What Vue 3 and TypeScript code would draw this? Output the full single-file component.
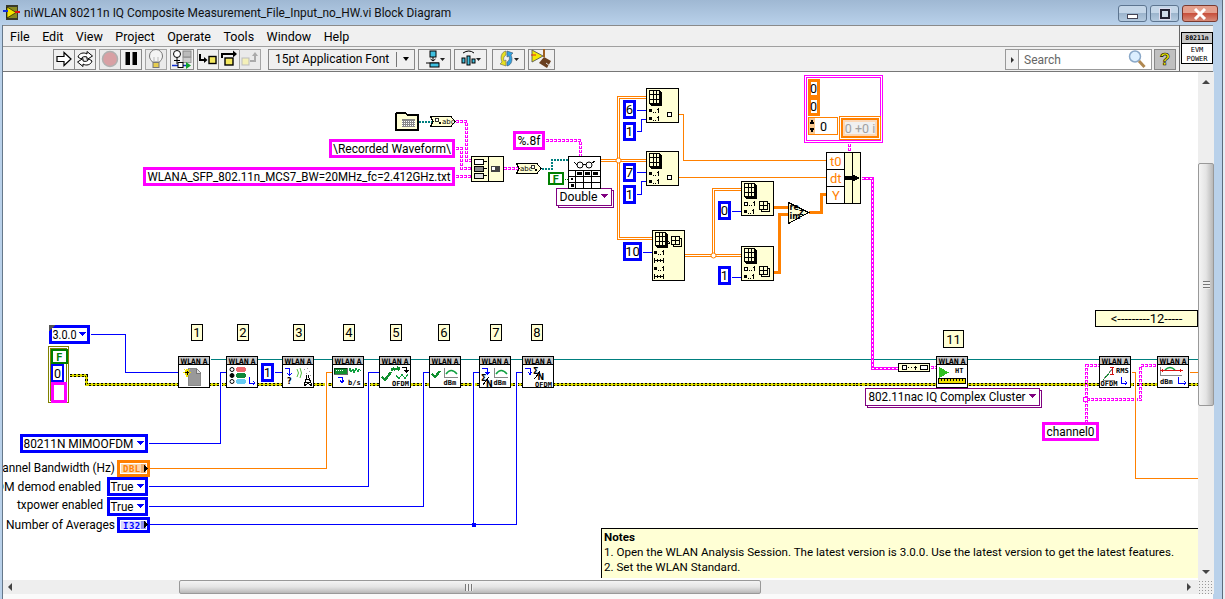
<template>
  <div class="window">
    <div class="title">
      <svg class="title-icon" width="17" height="17" viewBox="0 0 17 17">
        <rect x="3" y="1" width="12" height="15" fill="#3a3a2a" />
        <rect x="4" y="3" width="10" height="11" fill="#8a8a20" />
        <path d="M4 3 L13 8.5 L4 14 Z" fill="#f4e400" stroke="#000" stroke-width="0.6" />
        <path d="M0 7 H5" stroke="#1030e0" stroke-width="2" />
        <path d="M12 8 H17" stroke="#e01010" stroke-width="2" />
      </svg>
      <span class="title-text">niWLAN 80211n IQ Composite Measurement_File_Input_no_HW.vi Block Diagram</span>
      <div class="win-buttons">
        <div class="win-btn"><i class="min-glyph" /></div>
        <div class="win-btn"><i class="max-glyph" /></div>
        <div class="win-btn close">
          <svg width="14" height="12" viewBox="0 0 14 12"><path d="M2 1 L12 11 M12 1 L2 11" stroke="#fff" stroke-width="3" /></svg>
        </div>
      </div>
    </div>

    <div class="frame">
      <div class="inner">
        <div class="head">
          <div class="bars">
            <div class="menubar">
              <span v-for="m in menus" :key="m">{{ m }}</span>
            </div>
            <div class="toolbar">
              <div class="tb-group">
                <button class="tb">
                  <svg width="18" height="18" viewBox="0 0 18 18"><path d="M2 6.5 H9 V2.5 L16 9 L9 15.5 V11.5 H2 Z" fill="#fff" stroke="#000" stroke-width="1.2" /></svg>
                </button>
                <button class="tb">
                  <svg width="18" height="18" viewBox="0 0 18 18"><path d="M2 7 C3 3 8 2 11 4 V1.5 L16.5 6 L11 9.5 V7 C8 6 6 7 5 9 Z" fill="#fff" stroke="#000" /><path d="M16 11 C15 15 10 16 7 14 V16.5 L1.5 12 L7 8.5 V11 C10 12 12 11 13 9 Z" fill="#fff" stroke="#000" /></svg>
                </button>
              </div>
              <div class="tb-group">
                <button class="tb dim">
                  <svg width="18" height="18" viewBox="0 0 18 18"><circle cx="9" cy="9" r="7.5" fill="#d8a0a4" stroke="#b0b0b0" stroke-width="1.5" /></svg>
                </button>
                <button class="tb">
                  <svg width="18" height="18" viewBox="0 0 18 18"><path d="M3.5 2 H8 V15 H3.5 Z M10.5 2 H15 V15 H10.5 Z" fill="#000" /></svg>
                </button>
              </div>
              <div class="tb-group">
                <button class="tb dim">
                  <svg width="18" height="20" viewBox="0 0 18 20"><path d="M5.5 13 C4 11 2.5 10 2.5 7 A6.5 6.5 0 0 1 15.5 7 C15.5 10 14 11 12.5 13 Z" fill="#f4f4f4" stroke="#777" /><path d="M7 13 V8 M11 13 V8" stroke="#bbb" /><rect x="6" y="13.5" width="6" height="5" fill="#e6cd50" stroke="#777" /></svg>
                </button>
              </div>
              <div class="tb-group">
                <button class="tb wide">
                  <svg width="21" height="20" viewBox="0 0 21 20"><circle cx="5" cy="5" r="3.5" fill="#fff" stroke="#000" /><path d="M5 8.5 V15 M2 11.5 H8" stroke="#000" /><rect x="11" y="2" width="8" height="6" fill="#bbb" stroke="#888" /><rect x="11" y="8.5" width="8" height="5" fill="#ccc" stroke="#999" /><path d="M0 16.5 H14" stroke="#1030d0" stroke-width="1.5" /><rect x="6" y="13.5" width="5" height="5" fill="#fff" stroke="#000" /><path d="M14 13 L19 16.5 L14 20 Z" fill="#10a030" /></svg>
                </button>
              </div>
              <div class="tb-group">
                <button class="tb">
                  <svg width="19" height="18" viewBox="0 0 19 18"><path d="M1 4 V10 H7" fill="none" stroke="#000" stroke-width="2" /><path d="M5 7 L8.5 10 L5 13 Z" fill="#000" /><rect x="10" y="6.5" width="7" height="7" fill="#f4e860" stroke="#000" stroke-width="1.4" /></svg>
                </button>
                <button class="tb">
                  <svg width="19" height="18" viewBox="0 0 19 18"><path d="M2 8 V4 H13" fill="none" stroke="#000" stroke-width="2" /><path d="M13 0.5 L17 4 L13 7.5 Z" fill="#000" /><rect x="5" y="8" width="8" height="7" fill="#f4e860" stroke="#000" stroke-width="1.4" /></svg>
                </button>
                <button class="tb dim">
                  <svg width="19" height="18" viewBox="0 0 19 18"><rect x="1" y="8" width="7" height="7" fill="#f4f0b8" stroke="#bbb" /><path d="M9 11 H14 V5" fill="none" stroke="#aaa" stroke-width="2" /><path d="M11 6 L14 2 L17 6 Z" fill="#aaa" /></svg>
                </button>
              </div>
              <div class="font-select">
                <span class="font-label">15pt Application Font</span>
                <span class="font-sep" />
                <i class="font-arrow" />
              </div>
              <div class="tb-group">
                <button class="tb menu-btn">
                  <svg width="20" height="20" viewBox="0 0 20 20"><rect x="5" y="2" width="6" height="6" fill="#40c0e0" stroke="#000" /><path d="M8 8 V12 M5.5 10 L8 12 L10.5 10 M1 14 H14" stroke="#000" fill="none" /><rect x="5" y="14" width="9" height="4" fill="#40c0e0" stroke="#000" /><path d="M15 9 H20 L17.5 12 Z" fill="#222" /></svg>
                </button>
              </div>
              <div class="tb-group">
                <button class="tb menu-btn">
                  <svg width="20" height="20" viewBox="0 0 20 20"><path d="M2 4 Q8 0 13 4" stroke="#000" fill="none" /><rect x="1" y="9" width="3" height="5" fill="#40c0e0" stroke="#000" /><rect x="6" y="7" width="3" height="9" fill="#40c0e0" stroke="#000" /><rect x="11" y="10" width="3" height="4" fill="#40c0e0" stroke="#000" /><path d="M15 9 H20 L17.5 12 Z" fill="#222" /></svg>
                </button>
              </div>
              <div class="tb-group gap-b">
                <button class="tb menu-btn">
                  <svg width="20" height="20" viewBox="0 0 20 20"><path d="M7 2 C2 3 1 9 3 13 L1 15 L7 17 L7 11 L5 12 C4 9 5 7 7 6 Z" fill="#e8e020" stroke="#665" stroke-width="0.6" /><path d="M8 17 C13 16 14 10 12 6 L14 4 L8 2 L8 8 L10 7 C11 10 10 12 8 13 Z" fill="#30a0e0" stroke="#456" stroke-width="0.6" /><path d="M15 9 H20 L17.5 12 Z" fill="#222" /></svg>
                </button>
              </div>
              <div class="tb-group">
                <button class="tb clean">
                  <svg width="22" height="20" viewBox="0 0 22 20"><path d="M1 1 L12 7 L1 13 Z" fill="#f4e800" stroke="#665" /><path d="M0 6 H5" stroke="#e02020" /><path d="M13 0 V8 " stroke="#a06020" stroke-width="2" /><path d="M8 14 L13 8 L20 12 L16 19 Z" fill="#6a4020" /><path d="M15 14 L20 18" stroke="#ddd" /></svg>
                </button>
              </div>
              <div class="tb-spacer" />
              <div class="search">
                <i class="search-mark" />
                <span class="search-text">Search</span>
                <svg class="search-glass" width="20" height="20" viewBox="0 0 20 20"><circle cx="8" cy="7.5" r="5.5" fill="#dcefff" stroke="#8aa8c8" stroke-width="1.5" /><path d="M12 12 L17.5 18" stroke="#b08850" stroke-width="3" /></svg>
              </div>
              <div class="help">?</div>
            </div>
          </div>
          <div class="icon-pane">
            <div class="vi-icon">
              <div class="vi-icon-top">80211n</div>
              <div class="vi-icon-body">EVM<br />POWER</div>
            </div>
          </div>
        </div>

        <div class="main">
          <div class="canvas">
            <svg class="diagram" width="1195" height="506" viewBox="3 72 1195 506">
              <defs>
                <symbol id="arr" width="13" height="16" viewBox="0 0 13 16">
                  <rect x="2.5" y="2.5" width="10" height="13" fill="none" stroke="#000" />
                  <rect x="1.5" y="1.5" width="10" height="13" fill="#ffffd5" stroke="#000" />
                  <path d="M0.5 0.5 H10.5 V13.5 H0.5 Z M0.5 4.5 H10.5 M0.5 9 H10.5 M4 0.5 V13.5 M7.5 0.5 V13.5" fill="#ffffd5" stroke="#000" />
                </symbol>
                <symbol id="arr2" width="11" height="11" viewBox="0 0 11 11">
                  <path d="M2.5 2.5 H10.5 V10.5 H2.5 Z" fill="none" stroke="#000" />
                  <path d="M0.5 0.5 H8.5 V8.5 H0.5 Z M0.5 4.5 H8.5 M4.5 0.5 V8.5" fill="#ffffd5" stroke="#000" />
                </symbol>
                <symbol id="idx" width="11" height="5" viewBox="0 0 11 5">
                  <rect x="0" y="1" width="3" height="3" fill="#000" />
                  <path d="M4 4.5 H5 M6 4.5 H7 M9 0 V5 M8 1 H10" stroke="#000" />
                </symbol>
                <symbol id="len" width="10" height="5" viewBox="0 0 10 5">
                  <path d="M0.5 0 V5 M9.5 0 V5 M0 2.5 H10 M3 1 V4 M6 1 V4" stroke="#000" />
                </symbol>
              </defs>

              <!-- wires -->
              <g class="wires" transform="translate(0.5 0.5)">
                <path class="w-teal" d="M210 359 H1197" />
                <path class="w-err-base" d="M69 375 H86 V384 H1197" />
                <path class="w-err-dash" d="M69 375 H86 V384 H1197" />
                <path class="w-err-center" d="M69 375 H86 V384 H1197" />
                <template v-for="(w, i) in wires" :key="i">
                  <path v-if="w.kind === 'blue' || w.kind === 'orange'" class="w-halo" :d="w.d" />
                  <path :class="'w-' + w.kind" :d="w.d" />
                  <path v-if="w.kind === 'orange2'" class="w-center" :d="w.d" />
                  <path v-if="w.kind === 'pink' || w.kind === 'pink2'" class="w-pink-inner" :d="w.d" />
                </template>
                <circle cx="618" cy="160" r="2.5" fill="#fff" stroke="#ff8000" />
                <circle cx="713" cy="255" r="2.5" fill="#fff" stroke="#ff8000" />
                <rect x="471" y="522" width="4" height="4" fill="#0000ff" />
                <rect x="1083" y="397" width="4" height="4" fill="#fff" stroke="#ff00ff" />
              </g>

              <!-- numbered comments -->
              <g v-for="c in comments" :key="c.text">
                <rect class="note" :x="c.x + 0.5" :y="c.y + 0.5" :width="c.w" :height="c.h" />
                <text class="t" :x="c.x + c.w / 2 + 0.5" :y="c.y + c.h - 3.5" text-anchor="middle">{{ c.text }}</text>
              </g>

              <!-- terminal and constant boxes -->
              <g v-for="k in constants" :key="k.text + k.x + k.y">
                <rect :x="k.x + 1.5" :y="k.y + 1.5" :width="k.w - 3" :height="k.h - 3" fill="#fff" :stroke="k.color" stroke-width="3" />
                <text class="t" :x="k.x + k.w / 2" :y="k.y + k.h - 5" text-anchor="middle" :textLength="k.tw" lengthAdjust="spacingAndGlyphs">{{ k.text }}</text>
              </g>

              <!-- enum rings with arrow -->
              <g v-for="r in rings" :key="r.text + r.y">
                <rect :x="r.x + 1.5" :y="r.y + 1.5" :width="r.w - 3" :height="r.h - 3" fill="#fff" stroke="#0000ff" stroke-width="3" />
                <text class="t" :x="r.x + 3.5" :y="r.y + r.h - 5" :textLength="r.tw" lengthAdjust="spacingAndGlyphs">{{ r.text }}</text>
                <path :d="`M${r.x + r.w - 11} ${r.y + 7} h7 l-3.5 4 z`" fill="#0000ff" />
              </g>
              <path d="M49 325 H56 L49 331 Z" fill="#555" />

              <!-- typed rings -->
              <g v-for="r in typeRings" :key="r.text">
                <rect :x="r.x + 2.5" :y="r.y + 2.5" :width="r.w" :height="r.h" fill="#fff" stroke="#800080" />
                <rect :x="r.x + 0.5" :y="r.y + 0.5" :width="r.w" :height="r.h" fill="#fff" stroke="#800080" />
                <text class="t" :x="r.x + 3.5" :y="r.y + r.h - 4" :textLength="r.tw" lengthAdjust="spacingAndGlyphs">{{ r.text }}</text>
                <path :d="`M${r.x + r.w - 10} ${r.y + 6} h7 l-3.5 4 z`" fill="#800080" />
              </g>

              <!-- front panel labels -->
              <text v-for="l in labels" :key="l.text" class="t" :x="l.x" :y="l.y" text-anchor="end" :textLength="l.tw" lengthAdjust="spacingAndGlyphs">{{ l.text }}</text>

              <!-- numeric controls -->
              <g>
                <rect x="118.5" y="461.5" width="30" height="14" fill="#fff" stroke="#ff8000" stroke-width="3" />
                <rect x="121" y="464" width="25" height="9" fill="#fbd8b0" />
                <rect x="141" y="464" width="5" height="9" fill="#f0b070" />
                <text class="tiny-mono orange-t" x="123" y="472">DBL</text>
                <path d="M144 464 L148 468.5 L144 473 Z" fill="#000" />
                <rect x="118.5" y="518.5" width="30" height="13" fill="#fff" stroke="#0000ff" stroke-width="3" />
                <rect x="121" y="521" width="25" height="8" fill="#d8d8ff" />
                <rect x="141" y="521" width="5" height="8" fill="#9090f0" />
                <text class="tiny-mono blue-t" x="123" y="529">I32</text>
                <path d="M144 520 L148 524.5 L144 529 Z" fill="#000" />
              </g>

              <!-- error cluster constant -->
              <g>
                <rect x="48.5" y="346.5" width="20" height="56" fill="#fff" stroke="#808000" />
                <rect x="50.5" y="348.5" width="16" height="52" fill="#fff" stroke="#808000" />
                <rect x="52" y="350" width="15" height="13" fill="#fff" stroke="#007f00" stroke-width="2.5" />
                <text class="bold-tiny green-t" x="56" y="360.5">F</text>
                <rect x="52" y="365" width="11" height="16" fill="#fff" stroke="#0000ff" stroke-width="2.5" />
                <text class="t small" x="57.5" y="378" text-anchor="middle">0</text>
                <rect x="52" y="383" width="13" height="18" fill="#fff" stroke="#ff00ff" stroke-width="3" />
              </g>

              <!-- green boolean for read -->
              <g>
                <rect x="549" y="173" width="14" height="11" fill="#fff" stroke="#007f00" stroke-width="2.5" />
                <text class="bold-tiny green-t" x="552.5" y="183">F</text>
              </g>

              <!-- folder constant -->
              <g>
                <path d="M395.5 129.5 V114.5 L398 112.5 H405 L407 114.5 H417.5 V129.5 Z" fill="#ffffd5" stroke="#000" stroke-width="2" />
                <rect x="402" y="119" width="13" height="8" fill="#888" />
                <path d="M402 121 H415 M402 123 H415 M402 125 H415" stroke="#fff" stroke-dasharray="1 1" />
              </g>

              <!-- string conversion pills -->
              <g>
                <path class="cream-line" d="M430.5 116.5 H451 L455 121.5 L451 126.5 H430.5 L433 121.5 Z" />
                <rect x="435" y="118" width="3" height="3" fill="#fff" stroke="#000" stroke-width="0.8" />
                <rect x="439" y="122" width="2" height="2" fill="#000" />
                <text class="mini" x="442" y="124">abc</text>
                <path class="cream-line" d="M516.5 163.5 H537 L541 168.5 L537 173.5 H516.5 L519 168.5 Z" />
                <text class="mini" x="520" y="171">abc</text>
                <rect x="531" y="165" width="3" height="3" fill="#fff" stroke="#000" stroke-width="0.8" />
                <rect x="535" y="169" width="2" height="2" fill="#000" />
              </g>

              <!-- build path -->
              <g>
                <rect class="cream-node" x="471.5" y="156.5" width="32" height="25" />
                <path d="M488 157 V181" stroke="#000" />
                <rect x="474" y="159" width="9" height="5" fill="#fff" stroke="#000" />
                <rect x="474" y="166" width="9" height="5" fill="#888" stroke="#000" />
                <rect x="474" y="173" width="9" height="5" fill="#ddd" stroke="#000" />
                <path d="M484 161.5 H487 M484 168.5 H487 M484 175.5 H487" stroke="#000" />
                <rect x="491" y="165.5" width="9" height="6" fill="#444" />
                <rect x="492" y="167" width="3" height="3" fill="#fff" />
              </g>

              <!-- read from spreadsheet -->
              <g>
                <rect x="568.5" y="156.5" width="32" height="32" fill="#fff" stroke="#000" stroke-width="1.4" />
                <circle cx="580" cy="165" r="3" fill="none" stroke="#000" />
                <circle cx="589" cy="165" r="3" fill="none" stroke="#000" />
                <path d="M583 164 H586 M592 163 L595 161 M577 165 L574 162" stroke="#000" fill="none" />
                <path d="M569 170.5 H600 M569 176.5 H600 M569 182.5 H600 M575.5 171 V188 M583.5 171 V188 M591.5 171 V188" stroke="#000" />
                <rect x="577" y="172" width="5" height="3" fill="#000" />
                <rect x="585" y="172" width="5" height="3" fill="#000" />
                <rect x="593" y="172" width="5" height="3" fill="#000" />
                <rect x="571" y="178" width="2" height="2" fill="#000" />
                <rect x="571" y="184" width="3" height="3" fill="#000" />
              </g>

              <!-- index array nodes -->
              <g v-for="n in indexNodes" :key="n.x + '-' + n.y" :transform="`translate(${n.x} ${n.y})`">
                <rect class="cream-node" x="0.5" y="0.5" width="32" :height="n.h" />
                <use href="#arr" x="3" y="2" width="13" height="16" />
                <template v-if="n.type === 'elem'">
                  <use href="#idx" x="3" y="20" width="11" height="5" />
                  <use href="#idx" x="3" y="28" width="11" height="5" />
                  <rect x="21.5" y="24.5" width="4" height="4" fill="#fff" stroke="#000" />
                </template>
                <template v-else-if="n.type === 'col'">
                  <rect x="3.5" y="21.5" width="3" height="3" fill="#fff" stroke="#000" />
                  <path d="M8 24.5 H9 M10 24.5 H11 M13 20 V25 M12 21 H14" stroke="#000" />
                  <use href="#idx" x="3" y="28" width="11" height="5" />
                  <use href="#arr2" x="18" y="20" width="11" height="11" />
                </template>
                <template v-else>
                  <path d="M15 13 H18 M16.5 11.5 L18 13 L16.5 14.5" stroke="#000" fill="none" />
                  <use href="#arr2" x="19" y="6" width="11" height="11" />
                  <use href="#idx" x="2" y="20" width="11" height="5" />
                  <use href="#len" x="2" y="28" width="10" height="5" />
                  <use href="#idx" x="2" y="36" width="11" height="5" />
                  <use href="#len" x="2" y="44" width="10" height="5" />
                </template>
              </g>

              <!-- re/im to complex -->
              <g>
                <path class="cream-line" d="M788.5 202.5 L808.5 212.5 L788.5 223.5 Z" />
                <text class="mini bold" x="789.5" y="210">re</text>
                <text class="mini bold" x="789.5" y="219">im</text>
                <text class="mini bold" x="799" y="215">z</text>
              </g>

              <!-- bundle waveform -->
              <g>
                <rect x="826.5" y="152.5" width="18" height="51" fill="#fff" stroke="#000" />
                <rect class="cream-node" x="844.5" y="152.5" width="8" height="51" />
                <rect class="cream-node" x="852.5" y="152.5" width="8" height="51" />
                <path d="M827 169.5 H844 M827 186.5 H844" stroke="#000" />
                <text class="t orange-t" x="830" y="166">t0</text>
                <text class="t orange-t" x="830" y="183">dt</text>
                <text class="t orange-t" x="832" y="200">Y</text>
                <path d="M845 176 H852 V174 L860 178 L852 182 V180 H845 Z" fill="#000" />
              </g>

              <!-- complex array cluster constant -->
              <g>
                <rect x="804.5" y="75.5" width="78" height="67" fill="#fff" stroke="#ff00ff" />
                <rect x="806.5" y="77.5" width="74" height="63" fill="#fff" stroke="#ff00ff" />
                <rect x="809" y="80" width="9" height="16" fill="#fff" stroke="#ff8000" stroke-width="3" />
                <rect x="809" y="98" width="9" height="16" fill="#fff" stroke="#ff8000" stroke-width="3" />
                <text class="t small" x="813.5" y="93" text-anchor="middle">0</text>
                <text class="t small" x="813.5" y="111" text-anchor="middle">0</text>
                <rect x="808.5" y="117.5" width="29" height="17" fill="#fff" stroke="#ff8000" />
                <rect x="809" y="118" width="6" height="16" fill="#f8c890" />
                <path d="M812 119 L814.5 124 H809.5 Z M812 133 L814.5 128 H809.5 Z" fill="#000" />
                <text class="t small" x="820" y="131">0</text>
                <rect x="839.5" y="116.5" width="41" height="23" fill="#fff" stroke="#ff8000" />
                <rect x="842" y="119" width="36" height="18" fill="#fbd8b8" stroke="#ff8000" stroke-width="2" />
                <rect x="845" y="122" width="30" height="12" fill="#f0f0f0" />
                <text class="t small gray-t" x="860" y="133" text-anchor="middle">0 +0 i</text>
              </g>

              <!-- cluster to waveform pill -->
              <g>
                <rect class="cream-node" x="898.5" y="363.5" width="31" height="8" stroke-width="1.5" />
                <rect x="902" y="365" width="4" height="4" fill="#fff" stroke="#000" />
                <path d="M908 367.5 H909 M911 367.5 H912 M914 367.5 H917 M915.5 365.5 V369.5" stroke="#000" />
                <rect x="920" y="365" width="7" height="4" fill="#fff" stroke="#000" />
              </g>

              <!-- WLAN A subVIs -->
              <g v-for="b in blocks" :key="b.icon" :transform="`translate(${b.x} 356)`">
                <rect x="0.5" y="0.5" width="31" height="31" fill="#fff" stroke="#000" stroke-width="1.2" />
                <rect x="1" y="1" width="30" height="8" fill="#c8c8c8" />
                <path d="M1 8.5 H31" stroke="#000" />
                <text class="wlan" x="16" y="7.6" text-anchor="middle" textLength="27" lengthAdjust="spacingAndGlyphs">WLAN A</text>

                <template v-if="b.icon === 'open'">
                  <path d="M10.5 12.5 H18 L22.5 17 V29.5 H10.5 Z" fill="#999" stroke="#888" />
                  <path d="M18 12.5 V17 H22.5" fill="#ddd" stroke="#777" />
                  <path d="M5 16.5 H13 M9 12.5 V20.5 M6.5 13.5 L11.5 19.5 M11.5 13.5 L6.5 19.5" stroke="#f0e000" stroke-width="1.2" />
                  <path d="M9 14.5 V18.5 M7 16.5 H11" stroke="#000" />
                </template>
                <template v-else-if="b.icon === 'standard'">
                  <circle cx="6" cy="13.5" r="2" fill="#fff" stroke="#000" />
                  <circle cx="6" cy="19.5" r="2" fill="#000" stroke="#000" />
                  <circle cx="6" cy="25.5" r="2" fill="#fff" stroke="#000" />
                  <rect x="10" y="11" width="10" height="5" rx="2.5" fill="#f06a70" />
                  <rect x="10" y="17" width="10" height="5" rx="2.5" fill="#10883a" />
                  <rect x="10" y="23" width="10" height="5" rx="2.5" fill="#66ccf4" />
                  <path class="ic-blue" d="M23 21 V27 H29 M27 25 L29 27 L27 29" />
                </template>
                <template v-else-if="b.icon === 'stream'">
                  <path class="ic-blue" d="M3 12.5 H7.5 V19 M5 17 L7.5 19.5 L10 17" />
                  <text class="mini bold" x="5" y="28">?</text>
                  <path d="M15 13 Q18 17 15 21 M18 12 Q21 17 18 22" fill="none" stroke="#50c040" />
                  <path d="M22 13 h1 M25 12 h1 M27 15 h1 M24 17 h1 M28 19 h1" stroke="#999" />
                  <path d="M25 19 L22 30 M26 19 L30 30 M23 26 H29 M24 23 H28 M22 30 L28 26 M30 30 L24 26" fill="none" stroke="#000" />
                </template>
                <template v-else-if="b.icon === 'bw'">
                  <rect x="2" y="12" width="13" height="6" fill="#109030" stroke="#000" stroke-width="0.6" />
                  <path d="M4 14.5 H12" stroke="#fff" stroke-dasharray="1 1" />
                  <path class="ic-green" d="M17 15 L18 12 L19 16 L21 13 L22 17 L24 12 L26 16 L27 13 L29 15" />
                  <path class="ic-blue" d="M6 21 H10 V26 M8 24.5 L10 26.5 L12 24.5" />
                  <text class="mini2" x="16" y="28.5">b/s</text>
                </template>
                <template v-else-if="b.icon === 'ofdm'">
                  <path class="check" d="M3 21 L6 24 L12 16" />
                  <path d="M12 13.5 L21 12.5" stroke="#109030" stroke-width="2.4" />
                  <path d="M14 11 L16 15 M18 10.5 L20 14.5" stroke="#109030" stroke-width="1.2" />
                  <path d="M23 11.5 H27.5 V16 M25.5 14 L27.5 16.5 L29.5 14" fill="none" stroke="#000" />
                  <path class="ic-green" d="M17 19 L20 23 L23 18 L26 23 L29 18" />
                  <text class="mini2" x="13" y="30">OFDM</text>
                </template>
                <template v-else-if="b.icon === 'power'">
                  <path class="check" d="M3 18 L6 21 L11 15" />
                  <path d="M15.5 12 V21 H29" fill="none" stroke="#888" />
                  <path class="ic-green thick" d="M17 18 Q22 11 28 18" />
                  <text class="mini2" x="14.5" y="29">dBm</text>
                </template>
                <template v-else-if="b.icon === 'avgpower'">
                  <path class="ic-blue" d="M3 12.5 H8.5 V18 M6.5 16 L8.5 18.5 L10.5 16" />
                  <text class="mini bold" x="2" y="25">Σ</text>
                  <path d="M4 29 L10 21" stroke="#000" />
                  <text class="mini bold" x="7" y="30.5">N</text>
                  <path d="M15.5 12 V21 H29" fill="none" stroke="#888" />
                  <path class="ic-green thick" d="M17 18 Q22 11 28 18" />
                  <text class="mini2" x="14.5" y="29">dBm</text>
                </template>
                <template v-else-if="b.icon === 'avgofdm'">
                  <path class="ic-blue" d="M3 12.5 H8 V18 M6 16 L8 18.5 L10 16" />
                  <text class="mini bold" x="11" y="18">Σ</text>
                  <path d="M12.5 23 L18 15" stroke="#000" />
                  <text class="mini bold" x="15.5" y="23.5">N</text>
                  <text class="mini2" x="13" y="30.5">OFDM</text>
                </template>
                <template v-else-if="b.icon === 'read'">
                  <path d="M3 11 L13 16.5 L3 22 Z" fill="#30c020" />
                  <text class="mini2" x="19" y="17">HT</text>
                  <rect x="2.5" y="22.5" width="27" height="5" fill="#f0e000" stroke="#000" />
                  <path d="M5 23 V25 M8 23 V25 M11 23 V25 M14 23 V25 M17 23 V25 M20 23 V25 M23 23 V25 M26 23 V25" stroke="#000" />
                </template>
                <template v-else-if="b.icon === 'rms'">
                  <path d="M4 24 H16 M4 24 L14 12" stroke="#888" />
                  <path d="M4 24 L12 15" stroke="#109030" stroke-dasharray="2 1" />
                  <path d="M13 11 V18 M11 11 H15 M11 18 H15" stroke="#d01010" />
                  <text class="mini2" x="17" y="17">RMS</text>
                  <text class="mini2" x="1.5" y="30">OFDM</text>
                  <path class="ic-blue" d="M22 21 V27 H28 M26 25 L28 27 L26 29" />
                </template>
                <template v-else>
                  <path d="M3 11 V19 H25" fill="none" stroke="#888" />
                  <path d="M3 14.5 H26 M5 13 V16 M23 13 V16" stroke="#e01010" />
                  <path class="ic-green thick" d="M8 14 Q13 9 18 14" />
                  <text class="mini2" x="3" y="28">dBm</text>
                  <path class="ic-blue" d="M21 21 V27 H29 M27 25 L29 27 L27 29" />
                </template>
              </g>
            </svg>

            <div class="notes">
              <div class="notes-head">Notes</div>
              <div>1. Open the WLAN Analysis Session. The latest version is 3.0.0. Use the latest version to get the latest features.</div>
              <div>2. Set the WLAN Standard.</div>
            </div>
          </div>

          <div class="vscroll">
            <i class="arrow-up" />
            <div class="vthumb"><span class="vgrip" /></div>
            <span class="v-rest" />
            <i class="arrow-down" />
          </div>
        </div>

        <div class="bottom">
          <div class="hscroll">
            <i class="arrow-left" />
            <div class="hthumb"><span class="hgrip" /></div>
            <span class="v-rest" />
            <i class="arrow-right" />
          </div>
          <div class="corner" />
        </div>
        <div class="foot" />
      </div>
    </div>
  </div>
</template>

<script setup lang="ts">
// LabVIEW block diagram window; the diagram svg uses page coordinates in its viewBox
type WireKind = 'blue' | 'orange' | 'orange2' | 'orangeThick' | 'pink' | 'pink2' | 'teal' | 'tealDot' | 'greenDot'

interface Wire { d: string; kind: WireKind }
interface Box { x: number; y: number; w: number; h: number; text: string; color?: string; tw?: number }

const menus = ['File', 'Edit', 'View', 'Project', 'Operate', 'Tools', 'Window', 'Help']

const wires: Wire[] = [
  { kind: 'tealDot', d: 'M418 121 H431' },
  { kind: 'pink', d: 'M455 121 H466 V160 H472' },
  { kind: 'pink', d: 'M455 148 H461 V168 H472' },
  { kind: 'pink', d: 'M455 176 H472' },
  { kind: 'pink', d: 'M503 168 H517' },
  { kind: 'tealDot', d: 'M541 168 H551 V159 H568' },
  { kind: 'pink', d: 'M545 140 H580 V156' },
  { kind: 'greenDot', d: 'M564 179 H568' },
  { kind: 'orange2', d: 'M600 160 H646' },
  { kind: 'orange2', d: 'M646 97 H618 V238 H652' },
  { kind: 'blue', d: 'M636 110 H646' },
  { kind: 'blue', d: 'M636 131 H641 V119 H646' },
  { kind: 'blue', d: 'M636 172 H646' },
  { kind: 'blue', d: 'M636 194 H641 V181 H646' },
  { kind: 'blue', d: 'M642 252 H652' },
  { kind: 'orange2', d: 'M684 255 H741' },
  { kind: 'orange2', d: 'M741 189 H713 V255' },
  { kind: 'blue', d: 'M731 211 H741' },
  { kind: 'blue', d: 'M731 277 H741' },
  { kind: 'orangeThick', d: 'M773 207 H788' },
  { kind: 'orangeThick', d: 'M773 272 H779 V214 H788' },
  { kind: 'orangeThick', d: 'M808 212 H821 V194 H827' },
  { kind: 'orange', d: 'M678 114 H683 V160 H827' },
  { kind: 'orange', d: 'M678 177 H827' },
  { kind: 'pink', d: 'M849 143 V152' },
  { kind: 'pink2', d: 'M861 178 H872 V368 H898' },
  { kind: 'pink', d: 'M930 367 H937' },
  { kind: 'blue', d: 'M90 334 H125 V372 H178' },
  { kind: 'blue', d: 'M148 443 H220 V372 H226' },
  { kind: 'blue', d: 'M274 372 H282' },
  { kind: 'orange', d: 'M149 468 H326 V372 H332' },
  { kind: 'blue', d: 'M148 486 H368 V372 H379' },
  { kind: 'blue', d: 'M148 506 H423 V372 H429' },
  { kind: 'blue', d: 'M149 524 H516 V372 H522' },
  { kind: 'blue', d: 'M473 524 V372 H479' },
  { kind: 'pink', d: 'M1086 422 V365 H1099' },
  { kind: 'pink', d: 'M1086 399 H1140 V365 H1157' },
  { kind: 'orange', d: 'M1131 372 H1135 V478 H1197' },
  { kind: 'orange', d: 'M1189 372 H1197' },
]

const comments: Box[] = [
  { x: 191, y: 324, w: 11, h: 16, text: '1' },
  { x: 237, y: 324, w: 11, h: 16, text: '2' },
  { x: 293, y: 324, w: 11, h: 16, text: '3' },
  { x: 343, y: 324, w: 11, h: 16, text: '4' },
  { x: 390, y: 324, w: 11, h: 16, text: '5' },
  { x: 438, y: 324, w: 11, h: 16, text: '6' },
  { x: 490, y: 324, w: 11, h: 16, text: '7' },
  { x: 531, y: 324, w: 11, h: 16, text: '8' },
  { x: 943, y: 330, w: 20, h: 17, text: '11' },
  { x: 1095, y: 310, w: 102, h: 16, text: '<---------12-----' },
]

const BLUE = '#0000ff'
const PINK = '#ff00ff'
const constants: Box[] = [
  { x: 329, y: 139, w: 126, h: 19, text: '\\Recorded Waveform\\', color: PINK, tw: 118 },
  { x: 143, y: 167, w: 312, h: 19, text: 'WLANA_SFP_802.11n_MCS7_BW=20MHz_fc=2.412GHz.txt', color: PINK, tw: 303 },
  { x: 513, y: 131, w: 32, h: 19, text: '%.8f', color: PINK, tw: 23 },
  { x: 1042, y: 422, w: 57, h: 19, text: 'channel0', color: PINK, tw: 48 },
  { x: 623, y: 100, w: 13, h: 19, text: '6', color: BLUE },
  { x: 623, y: 122, w: 13, h: 19, text: '1', color: BLUE },
  { x: 623, y: 163, w: 13, h: 19, text: '7', color: BLUE },
  { x: 623, y: 185, w: 13, h: 19, text: '1', color: BLUE },
  { x: 623, y: 242, w: 19, h: 19, text: '10', color: BLUE },
  { x: 718, y: 201, w: 13, h: 19, text: '0', color: BLUE },
  { x: 718, y: 266, w: 13, h: 19, text: '1', color: BLUE },
  { x: 261, y: 363, w: 13, h: 19, text: '1', color: BLUE },
]

const rings: Box[] = [
  { x: 49, y: 325, w: 41, h: 19, text: '3.0.0', tw: 24 },
  { x: 20, y: 434, w: 128, h: 19, text: '80211N MIMOOFDM', tw: 110 },
  { x: 107, y: 477, w: 41, h: 19, text: 'True', tw: 23 },
  { x: 107, y: 497, w: 41, h: 19, text: 'True', tw: 23 },
]

const typeRings: Box[] = [
  { x: 556, y: 188, w: 55, h: 17, text: 'Double', tw: 38 },
  { x: 865, y: 388, w: 174, h: 17, text: '802.11nac IQ Complex Cluster', tw: 157 },
]

const labels = [
  { x: 115, y: 472, text: 'Channel Bandwidth (Hz)', tw: 127 },
  { x: 101, y: 491, text: 'OFDM demod enabled', tw: 120 },
  { x: 103, y: 509, text: 'txpower enabled', tw: 86 },
  { x: 115, y: 529, text: 'Number of Averages', tw: 109 },
]

const indexNodes = [
  { x: 646, y: 88, h: 34, type: 'elem' },
  { x: 646, y: 151, h: 34, type: 'elem' },
  { x: 741, y: 181, h: 34, type: 'col' },
  { x: 741, y: 246, h: 34, type: 'col' },
  { x: 652, y: 230, h: 50, type: 'multi' },
]

const blocks = [
  { x: 178, icon: 'open' },
  { x: 226, icon: 'standard' },
  { x: 282, icon: 'stream' },
  { x: 332, icon: 'bw' },
  { x: 379, icon: 'ofdm' },
  { x: 429, icon: 'power' },
  { x: 479, icon: 'avgpower' },
  { x: 522, icon: 'avgofdm' },
  { x: 936, icon: 'read' },
  { x: 1099, icon: 'rms' },
  { x: 1157, icon: 'spectrum' },
]
</script>

<style scoped>
.window {
  width: 1223px;
  height: 599px;
  display: flex;
  flex-direction: column;
  font-family: Roboto, "Noto Sans", sans-serif;
  color: #000;
  overflow: hidden;
}

.title {
  height: 25px;
  flex: none;
  display: flex;
  align-items: center;
  padding: 0 4px 0 3px;
  background: linear-gradient(#9fb8d3, #b9d1ea);
  box-sizing: border-box;
  border-right: 1px solid #5c6c7c;
}

.title-icon {
  margin-right: 4px;
  flex: none;
}

.title-text {
  font-size: 11.9px;
  color: #111;
  white-space: nowrap;
}

.win-buttons {
  margin-left: auto;
  display: flex;
  gap: 3px;
  align-self: flex-start;
  margin-top: 5px;
}

.win-btn {
  width: 29px;
  height: 17px;
  box-sizing: border-box;
  border: 1px solid #5d7590;
  border-radius: 3px;
  background: linear-gradient(#c4d6e8 45%, #9cb5cd 50%, #b4cadf);
  display: flex;
  align-items: center;
  justify-content: center;
}

.win-btn.close {
  width: 36px;
  background: linear-gradient(#e4a08e 45%, #c8503c 50%, #d68a78);
  border-color: #7a3a30;
}

.min-glyph {
  display: block;
  width: 9px;
  height: 3px;
  margin-top: 5px;
  background: #fff;
  border: 1px solid #445;
}

.max-glyph {
  display: block;
  width: 6px;
  height: 6px;
  background: #cfdcea;
  border: 2px solid #223;
  outline: 1px solid #dde;
}

.frame {
  flex: 1;
  display: flex;
  min-height: 0;
  background: #b9d1ea;
  border-left: 2px solid #b9d1ea;
  padding-right: 9px;
  border-right: 1px solid #5c6c7c;
}

.inner {
  flex: 1;
  display: flex;
  flex-direction: column;
  min-width: 0;
  border-left: 1px solid #66788a;
  background: #f0f0f0;
}

.head {
  height: 47px;
  flex: none;
  display: flex;
  border-top: 1px solid #8a8a8a;
  box-sizing: border-box;
  border-bottom: 1px solid #777;
}

.bars {
  flex: 1;
  min-width: 0;
  display: flex;
  flex-direction: column;
}

.menubar {
  height: 21px;
  box-sizing: border-box;
  display: flex;
  align-items: center;
  gap: 12.5px;
  padding-left: 7px;
  font-size: 12.5px;
  border-bottom: 1px solid #a0a0a0;
}

.toolbar {
  flex: 1;
  display: flex;
  align-items: center;
  padding-left: 51px;
  padding-right: 3px;
  gap: 4px;
}

.tb-group {
  display: flex;
}

.gap-b {
  margin-left: 2px;
}

.tb {
  width: 22px;
  height: 21px;
  padding: 0;
  margin: 0;
  box-sizing: border-box;
  background: #f0f0f0;
  border: 1px solid #888;
  margin-left: -1px;
  display: flex;
  align-items: center;
  justify-content: center;
}

.tb.dim {
  background: #eaeaea;
  border-color: #a4a4a4;
}

.tb.wide {
  width: 24px;
}

.tb.menu-btn {
  width: 33px;
}

.tb.clean {
  width: 27px;
}

.font-select {
  width: 147px;
  height: 21px;
  box-sizing: border-box;
  border: 1px solid #888;
  margin-left: 3px;
  display: flex;
  align-items: center;
  padding-left: 6px;
  font-size: 12px;
  white-space: nowrap;
}

.font-label {
  flex: 1;
}

.font-sep {
  width: 1px;
  height: 15px;
  background: #777;
}

.font-arrow {
  width: 0;
  height: 0;
  margin: 0 5px 0 6px;
  border-left: 3.5px solid transparent;
  border-right: 3.5px solid transparent;
  border-top: 4px solid #000;
}

.tb-spacer {
  flex: 1;
}

.search {
  width: 147px;
  height: 21px;
  box-sizing: border-box;
  background: #fff;
  border: 1px solid #999;
  display: flex;
  align-items: center;
  font-size: 12px;
  color: #666;
}

.search-mark {
  width: 13px;
  height: 19px;
  flex: none;
  box-sizing: border-box;
  background: #f0f0f0;
  border-right: 1px solid #999;
  position: relative;
}

.search-mark::after {
  content: "";
  position: absolute;
  left: 5px;
  top: 7px;
  border-left: 3px solid #333;
  border-top: 3px solid transparent;
  border-bottom: 3px solid transparent;
}

.search-text {
  margin: 2px 0 0 5px;
  flex: 1;
}

.search-glass {
  margin-right: 4px;
}

.help {
  width: 22px;
  height: 21px;
  box-sizing: border-box;
  margin-left: -2px;
  background: #c0c0c0;
  border: 1px solid #888;
  font: bold 17px/19px "Liberation Sans", sans-serif;
  text-align: center;
  color: #f4f000;
  -webkit-text-stroke: 0.6px #000;
}

.icon-pane {
  width: 34px;
  flex: none;
  padding: 7px 0 0 1px;
  box-sizing: border-box;
  border-left: 1px solid #666;
  height: 46px;
  align-self: flex-end;
  margin-right: 0;
}

.vi-icon {
  width: 32px;
  height: 32px;
  box-sizing: border-box;
  border: 1px solid #000;
  background: #fff;
  font: 7px/8px "DejaVu Sans Mono", monospace;
  text-align: center;
}

.vi-icon-top {
  height: 10px;
  line-height: 10px;
  background: #c8c8c8;
  border-bottom: 1px solid #000;
  font-weight: bold;
  font-size: 6.5px;
}

.vi-icon-body {
  padding-top: 2px;
  line-height: 9px;
}

.main {
  flex: 1;
  min-height: 0;
  display: flex;
  padding-right: 2px;
}

.canvas {
  width: 1195px;
  flex: none;
  position: relative;
  background: #fff;
  overflow: hidden;
}

.diagram {
  display: block;
  shape-rendering: crispEdges;
}

.diagram path[d*="Q"],
.diagram circle {
  shape-rendering: auto;
}

.t {
  font-family: Roboto, "Noto Sans", sans-serif;
  font-size: 13px;
  fill: #000;
}

.t.small {
  font-size: 12.5px;
}

.wlan {
  font: bold 7.5px "DejaVu Sans", sans-serif;
  fill: #000;
}

.mini {
  font: 7px "DejaVu Sans", sans-serif;
  fill: #000;
}

.mini.bold {
  font-weight: bold;
  font-size: 8px;
}

.mini2 {
  font: bold 7px "DejaVu Sans Mono", monospace;
  fill: #000;
}

.tiny-mono {
  font: bold 9px "DejaVu Sans Mono", monospace;
  letter-spacing: 0.5px;
}

.bold-tiny {
  font: bold 11px "DejaVu Sans Mono", monospace;
}

.orange-t {
  fill: #ff8000;
}

.blue-t {
  fill: #0000ff;
}

.green-t {
  fill: #007f00;
}

.gray-t {
  fill: #a0a0a0;
}

.note {
  fill: #ffffd5;
  stroke: #000;
}

.cream-node {
  fill: #ffffd5;
  stroke: #000;
  stroke-width: 1.2;
}

.cream-line {
  fill: #ffffd5;
  stroke: #000;
}

.wires path {
  fill: none;
}

.w-halo {
  stroke: #fff;
  stroke-width: 3;
}

.w-blue {
  stroke: #0000ff;
}

.w-orange {
  stroke: #ff8000;
}

.w-orange2 {
  stroke: #ff8000;
  stroke-width: 3;
}

.w-center {
  stroke: #fff;
}

.w-orangeThick {
  stroke: #ff8000;
  stroke-width: 3;
}

.w-pink {
  stroke: #ff00ff;
  stroke-width: 3;
  stroke-dasharray: 3 1;
}

.w-pink2 {
  stroke: #ff00ff;
  stroke-width: 3;
}

.w-pink-inner {
  stroke: #fff;
  stroke-dasharray: 2 2;
}

.w-teal {
  stroke: #007f7f;
}

.w-tealDot {
  stroke: #007f7f;
  stroke-width: 2;
  stroke-dasharray: 2 1;
}

.w-greenDot {
  stroke: #007f00;
  stroke-dasharray: 1 1;
}

.w-err-base {
  stroke: #d8d800;
  stroke-width: 3;
}

.w-err-dash {
  stroke: #000;
  stroke-width: 3;
  stroke-dasharray: 2 2;
}

.w-err-center {
  stroke: #d8d800;
}

.ic-blue {
  fill: none;
  stroke: #0000ff;
}

.ic-green {
  fill: none;
  stroke: #10a040;
}

.ic-green.thick {
  stroke-width: 1.5;
}

.check {
  fill: none;
  stroke: #109030;
  stroke-width: 2.4;
}

.notes {
  position: absolute;
  left: 598px;
  top: 456px;
  width: 597px;
  height: 50px;
  box-sizing: border-box;
  padding: 1px 0 0 2px;
  background: #ffffd5;
  border-top: 1px solid #000;
  border-left: 1px solid #000;
  font-size: 11.6px;
  line-height: 15px;
}

.notes-head {
  font-weight: bold;
}

.vscroll {
  width: 16px;
  flex: none;
  display: flex;
  flex-direction: column;
  align-items: center;
  background: #eeeeee;
}

.arrow-up {
  margin-top: 8px;
  border-left: 4px solid transparent;
  border-right: 4px solid transparent;
  border-bottom: 4px solid #444;
}

.vthumb {
  width: 16px;
  height: 243px;
  margin-top: 79px;
  box-sizing: border-box;
  border: 1px solid #999;
  border-radius: 2px;
  background: linear-gradient(90deg, #f4f4f4, #e4e4e4 50%, #b8b8b8);
  display: flex;
  align-items: center;
  justify-content: center;
  flex: none;
}

.vgrip {
  width: 7px;
  height: 8px;
  background: repeating-linear-gradient(#777 0 1px, #eee 1px 3px);
}

.v-rest {
  flex: 1;
}

.arrow-down {
  margin-bottom: 6px;
  border-left: 4px solid transparent;
  border-right: 4px solid transparent;
  border-top: 4px solid #444;
}

.bottom {
  height: 14px;
  flex: none;
  display: flex;
  padding-right: 2px;
}

.hscroll {
  width: 1195px;
  flex: none;
  display: flex;
  align-items: center;
  background: #eeeeee;
}

.arrow-left {
  margin-left: 5px;
  border-top: 4px solid transparent;
  border-bottom: 4px solid transparent;
  border-right: 4px solid #444;
}

.hthumb {
  width: 582px;
  height: 14px;
  margin-left: 167px;
  box-sizing: border-box;
  border: 1px solid #999;
  border-radius: 2px;
  background: linear-gradient(#f4f4f4, #e4e4e4 50%, #b8b8b8);
  position: relative;
  flex: none;
}

.hgrip {
  position: absolute;
  left: 285px;
  top: 3px;
  width: 8px;
  height: 7px;
  background: repeating-linear-gradient(90deg, #777 0 1px, #eee 1px 3px);
}

.arrow-right {
  margin-right: 7px;
  border-top: 4px solid transparent;
  border-bottom: 4px solid transparent;
  border-left: 4px solid #444;
}

.corner {
  width: 16px;
  flex: none;
  background: #f0f0f0;
  background-image: radial-gradient(#999 0.7px, transparent 0.8px);
  background-size: 3px 3px;
  background-position: 6px 3px;
}

.foot {
  height: 5px;
  flex: none;
  background: #fafafa;
}
</style>

<style>
html,
body {
  background: #e6edf4;
}
</style>
